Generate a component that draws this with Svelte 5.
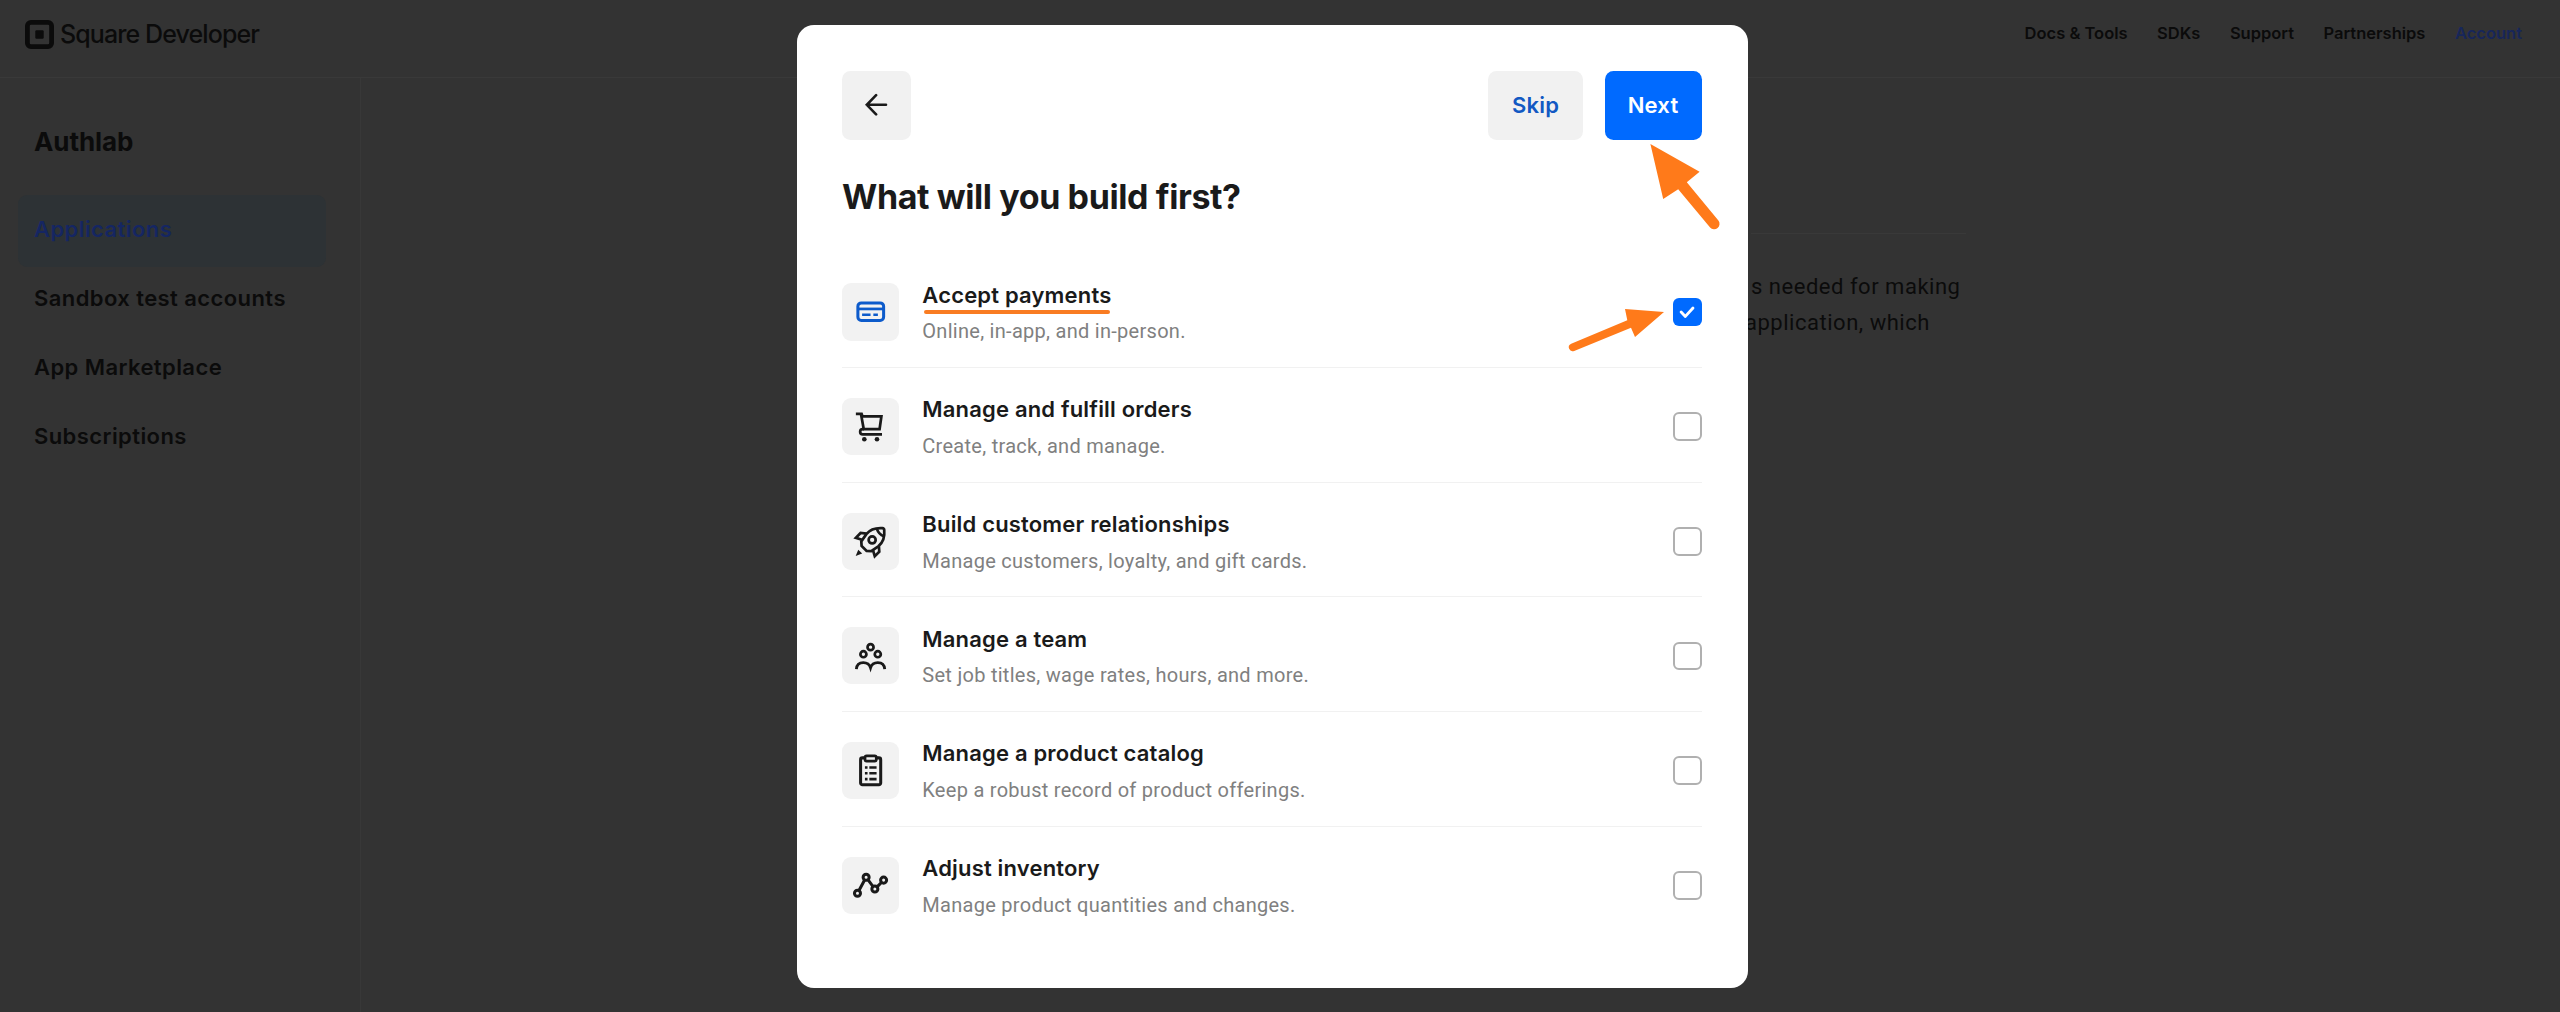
<script>
  const nav = ['Docs & Tools', 'SDKs', 'Support', 'Partnerships', 'Account'];
  const side = ['Applications', 'Sandbox test accounts', 'App Marketplace', 'Subscriptions'];

  let options = $state([
    { icon: 'card', title: 'Accept payments', text: 'Online, in-app, and in-person.', checked: true },
    { icon: 'cart', title: 'Manage and fulfill orders', text: 'Create, track, and manage.', checked: false },
    { icon: 'rocket', title: 'Build customer relationships', text: 'Manage customers, loyalty, and gift cards.', checked: false },
    { icon: 'team', title: 'Manage a team', text: 'Set job titles, wage rates, hours, and more.', checked: false },
    { icon: 'clipboard', title: 'Manage a product catalog', text: 'Keep a robust record of product offerings.', checked: false },
    { icon: 'graph', title: 'Adjust inventory', text: 'Manage product quantities and changes.', checked: false }
  ]);
</script>

<div class="page">
  <header class="topbar">
    <div class="brand">
      <svg class="logo" viewBox="0 0 29 29" aria-hidden="true">
        <rect x="2.4" y="2.4" width="24.2" height="24.2" rx="3.6" fill="none" stroke="currentColor" stroke-width="4.8" />
        <rect x="10.3" y="10.3" width="8.4" height="8.4" rx="1.2" fill="currentColor" />
      </svg>
      <span>Square Developer</span>
    </div>
    <nav class="nav">
      {#each nav as item}
        <span class:current={item === 'Account'}>{item}</span>
      {/each}
    </nav>
  </header>

  <div class="body">
    <aside class="sidebar">
      <h2>Authlab</h2>
      <ul>
        {#each side as item, i}
          <li class:active={i === 0}>{item}</li>
        {/each}
      </ul>
    </aside>
    <main class="main">
      <div class="intro">
        <p>s needed for making</p>
        <p class="second">application, which</p>
      </div>
    </main>
  </div>

  <div class="overlay">
    <section class="modal">
      <div class="actions">
        <button class="btn back" aria-label="Back">
          <svg viewBox="0 0 24 24" aria-hidden="true">
            <path d="M21 11.8H1.9M11.1 2.2 1.8 11.8l9.3 9.6" fill="none" stroke="currentColor" stroke-width="2.6" stroke-linecap="round" stroke-linejoin="miter" />
          </svg>
        </button>
        <div class="right">
          <button class="btn skip">Skip</button>
          <button class="btn next">Next</button>
        </div>
      </div>

      <h1>What will you build first?</h1>

      <ul class="options">
        {#each options as o, i}
          <li class="option">
            <span class="tile" class:on={o.checked}>
              <svg viewBox="0 0 57 57" fill="none" stroke="currentColor" stroke-width="2.7" aria-hidden="true">
                {#if o.icon === 'card'}
                  <rect x="15.8" y="19.8" width="25.6" height="17.4" rx="3.4" stroke-width="3" />
                  <path d="M16 25.8h25" />
                  <path d="M20 31.6h8.4M31.2 31.6h4.5" />
                {:else if o.icon === 'cart'}
                  <path d="M13.8 15.8h5.7l.8 2.4h18.9l-1.8 12.7H21.6L18.9 16" />
                  <path d="M21.8 31h-1.2a2.5 2.5 0 0 0 0 5.1h19.2" />
                  <circle cx="22.2" cy="41" r="2.3" fill="currentColor" stroke="none" />
                  <circle cx="34.8" cy="41" r="2.3" fill="currentColor" stroke="none" />
                {:else if o.icon === 'rocket'}
                  <path d="M40.2 15C33.6 14.6 27.9 16.4 24.4 20.8l-5.2 7.4.3 4.5 5 5 4.6.2 7-4.7c5-4 6.6-9.6 5.9-16.4a2 2 0 0 0-1.8-1.8Z" />
                  <circle cx="30" cy="26.8" r="3.5" />
                  <path d="M34.6 15.6c1.2 3.6 3.6 6.4 7.1 7.6" />
                  <path d="m24.5 20.5-6-.6-4.7 4.8 6 1.9M36.7 33.2l.4 5.3-4.5 4.4-1.8-6" />
                  <path d="m16.2 36.5-2.6 6.4 6.5-2.7Z" fill="currentColor" stroke="none" />
                {:else if o.icon === 'team'}
                  <circle cx="28.4" cy="20.1" r="3" />
                  <circle cx="21.3" cy="27.1" r="3" />
                  <circle cx="35.6" cy="27.1" r="3" />
                  <path d="M14.3 42c.3-4.4 3.2-6.5 6.9-6.5 3.6 0 6.2 1.9 7.2 5.1 1-3.2 3.6-5.1 7.2-5.1 3.7 0 6.6 2.1 6.9 6.5" stroke-width="2.8" />
                {:else if o.icon === 'clipboard'}
                  <path d="M22.5 15.8h-2.2a1.8 1.8 0 0 0-1.8 1.8v23.2a1.8 1.8 0 0 0 1.8 1.8h16.4a1.8 1.8 0 0 0 1.8-1.8V17.6a1.8 1.8 0 0 0-1.8-1.8h-2.2" stroke-width="3" />
                  <rect x="22.9" y="13.7" width="11.2" height="5.4" rx="1.6" />
                  <path d="M22.8 25.4h2.6M27.2 25.4h7.2M22.8 31.1h2.6M27.2 31.1h7.2M22.8 36.9h2.6M27.2 36.9h7.2" stroke-width="2.6" />
                {:else}
                  <g stroke-width="3">
                    <circle cx="15.4" cy="36" r="3" />
                    <circle cx="24" cy="20.1" r="3" />
                    <circle cx="32.7" cy="31.9" r="3" />
                    <circle cx="41.4" cy="23" r="3" />
                    <path d="m16.9 33.3 5.6-10.5M25.8 22.6l5.1 6.8M34.9 29.7l4.3-4.4" />
                  </g>
                {/if}
              </svg>
            </span>
            <span class="copy">
              <span class="title" class:marked={i === 0}>{o.title}</span>
              <span class="text">{o.text}</span>
            </span>
            <button class="check" class:checked={o.checked} aria-label={o.title} onclick={() => (o.checked = !o.checked)}>
              {#if o.checked}
                <svg viewBox="0 0 29 29" aria-hidden="true">
                  <path d="m8.2 14.2 4.3 4.4 7.7-8.4" fill="none" stroke="#fff" stroke-width="2.9" stroke-linecap="round" stroke-linejoin="round" />
                </svg>
              {/if}
            </button>
          </li>
        {/each}
      </ul>

      <!-- Callout arrows pointing at the Next button and the first checkbox -->
      <svg class="callout to-next" viewBox="0 0 72 90" aria-hidden="true">
        <path d="M2.4 2 51.6 29.7 38.8 40.2 70.4 78.6a5.4 5.4 0 0 1-8.3 6.9L30.2 47.3 15.2 57Z" fill="#ff7a1a" />
      </svg>
      <svg class="callout to-check" viewBox="0 0 100 50" aria-hidden="true">
        <path d="M96 8 57 5l2.3 11.3L3.2 39.8a3.8 3.8 0 0 0 3 7.1L63 23.7 67 33Z" fill="#ff7a1a" />
      </svg>
    </section>
  </div>
</div>

<style>
  :global(body) { background: #333; }
  ul { list-style: none; margin: 0; padding: 0; }
  h1, h2, p { margin: 0; }
  button { border: 0; padding: 0; font: inherit; cursor: pointer; }
  svg { display: block; }

  .page {
    position: relative;
    box-sizing: border-box;
    width: 2560px;
    height: 1012px;
    overflow: hidden;
    display: flex;
    flex-direction: column;
    background: #333;
    color: #0b0b0b;
    font-family: Inter, "Liberation Sans", sans-serif;
  }

  .topbar {
    box-sizing: border-box;
    height: 78px;
    flex: none;
    display: flex;
    justify-content: space-between;
    align-items: flex-start;
    padding: 14px 38px 0 25px;
    border-bottom: 1px solid #393939;
  }
  .brand { display: flex; align-items: center; gap: 6px; height: 40px; font-size: 25px; font-weight: 500; letter-spacing: -0.9px; }
  .logo { width: 29px; height: 29px; }
  .nav { display: flex; gap: 29.5px; font-size: 16.5px; font-weight: 600; line-height: 39px; }
  .nav .current { color: #17265a; }

  .body { flex: 1; display: flex; }
  .sidebar { box-sizing: border-box; width: 361px; padding: 41.5px 34px 0 18px; border-right: 1px solid #383838; }
  .sidebar h2 { padding-left: 16px; font-size: 26px; font-weight: 700; line-height: 44px; letter-spacing: -0.1px; }
  .sidebar ul { padding-top: 31px; }
  .sidebar li { height: 69px; padding-left: 16px; font-size: 22px; font-weight: 600; line-height: 69px; letter-spacing: 0.42px; }
  .sidebar .active { height: 72px; margin-bottom: -3px; border-radius: 9px; background: #2d3235; color: #152662; }

  .main { flex: 1; display: flex; justify-content: flex-end; padding: 155px 594px 0 0; }
  .intro { width: 215px; height: 120px; padding-top: 35px; border-top: 1px solid #393939; font: 22px/35.5px Roboto, sans-serif; letter-spacing: 0.52px; white-space: nowrap; }
  .intro .second { margin-left: -6px; }

  .overlay { position: absolute; inset: 0; display: flex; justify-content: center; align-items: flex-start; padding: 25px 16px 0 0; }
  .modal {
    position: relative;
    box-sizing: border-box;
    width: 951px;
    height: 963px;
    padding: 45.5px 46px 0 45.5px;
    border-radius: 17px;
    background: #fff;
    color: #1a1a1a;
  }

  .actions { display: flex; justify-content: space-between; height: 69px; }
  .right { display: flex; gap: 21.5px; }
  .btn { display: flex; align-items: center; justify-content: center; height: 69px; border-radius: 8.5px; background: #f1f1f1; font-size: 22px; font-weight: 600; letter-spacing: 0.2px; }
  .back { width: 69px; color: #1a1a1a; }
  .back svg { width: 24px; height: 24px; }
  .skip { width: 95px; color: #1259c3; }
  .next { width: 97px; background: #006aff; color: #fff; }

  h1 { margin-top: 35.5px; font-size: 34px; font-weight: 700; line-height: 44px; letter-spacing: -0.4px; }

  .options { margin-top: 34.3px; }
  .option { box-sizing: border-box; display: flex; align-items: center; height: 114.67px; padding-top: 3.5px; border-bottom: 1.5px solid #f1f1f1; }
  .option:last-child { border-bottom-color: transparent; }
  .tile { width: 57.3px; height: 57.3px; border-radius: 9px; background: #f2f2f2; color: #1a1a1a; }
  .tile.on { color: #0d5bcb; }
  .tile svg { width: 100%; height: 100%; }
  .copy { flex: 1; display: flex; flex-direction: column; align-items: flex-start; gap: 6.7px; margin-left: 23px; }
  .title { position: relative; font-size: 22px; font-weight: 600; line-height: 32px; letter-spacing: 0.18px; }
  .marked::after { content: ""; position: absolute; left: 2px; right: 1px; bottom: -3.5px; height: 4px; border-radius: 2px; background: #f97c22; }
  .text { font: 20px/28px Roboto, sans-serif; letter-spacing: 0.28px; color: #808080; }

  .check { box-sizing: border-box; width: 28.7px; height: 28.7px; border: 2.8px solid #b0b0b0; border-radius: 6px; background: #fff; }
  .checked { border: 0; background: #006aff; }
  .check svg { width: 100%; height: 100%; }

  .callout { position: absolute; overflow: visible; }
  .to-next { left: 851.5px; top: 117px; width: 72px; height: 90px; }
  .to-check { left: 771.5px; top: 279px; width: 100px; height: 50px; }
</style>
